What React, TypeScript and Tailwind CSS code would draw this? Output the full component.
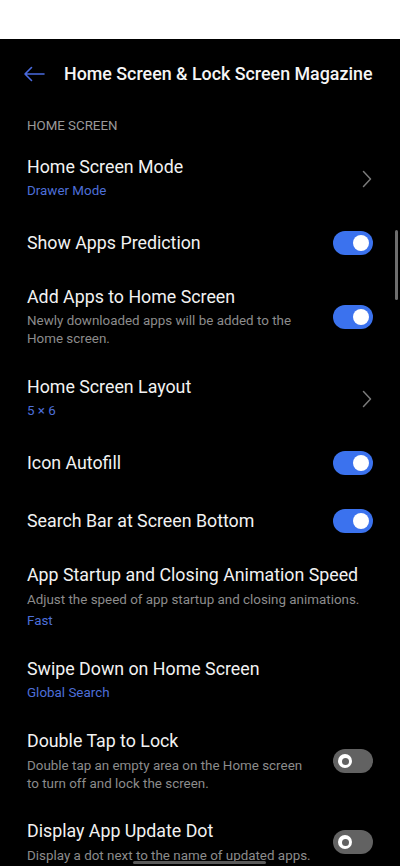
import React from "react";

type RowProps = {
  mt: string;
  title: string;
  desc?: string[];
  descMt?: string;
  value?: string;
  right?: "chevron" | "on" | "off";
};

function Toggle({ on }: { on: boolean }) {
  if (on) {
    return (
      <div className="flex h-[24px] w-[40px] items-center justify-end rounded-full bg-[#3b72ee] pr-[4px]">
        <div className="h-[16px] w-[16px] rounded-full bg-white" />
      </div>
    );
  }
  return (
    <div className="flex h-[24px] w-[40px] items-center justify-start rounded-full bg-[#626262] pl-[5px]">
      <div className="flex h-[14px] w-[14px] items-center justify-center rounded-full bg-white">
        <div className="h-[7px] w-[7px] rounded-full bg-[#626262]" />
      </div>
    </div>
  );
}

function Chevron() {
  return (
    <svg width="10" height="18" viewBox="0 0 10 18" fill="none">
      <path d="M1.5 1.5 L8.5 9 L1.5 16.5" stroke="#7a7a7a" strokeWidth="1.5" strokeLinecap="round" strokeLinejoin="round" />
    </svg>
  );
}

function Row({ mt, title, desc, descMt, value, right }: RowProps) {
  return (
    <div className={`flex items-center pl-[27px] pr-[27px] ${mt}`}>
      <div className="flex min-w-0 flex-1 flex-col">
        <div className="whitespace-nowrap text-[17.8px] leading-[24px] text-[#f2f2f2]">{title}</div>
        {desc && (
          <div className={`${descMt ?? "mt-[3px]"} whitespace-nowrap text-[13.4px] leading-[18px] text-[#8c8c8c]`}>
            {desc.map((d, i) => (
              <div key={i}>{d}</div>
            ))}
          </div>
        )}
        {value && <div className="text-[13.4px] leading-[24px] text-[#4d6fd9]">{value}</div>}
      </div>
      {right === "chevron" && (
        <div className="ml-3 flex w-[40px] justify-end pr-[1px]">
          <Chevron />
        </div>
      )}
      {right === "on" && (
        <div className="ml-3">
          <Toggle on />
        </div>
      )}
      {right === "off" && (
        <div className="ml-3">
          <Toggle on={false} />
        </div>
      )}
    </div>
  );
}

export default function App() {
  return (
    <div
      className="relative h-[866px] w-[400px] overflow-hidden bg-black"
      style={{ fontFamily: "Roboto, 'Noto Sans', sans-serif" }}
    >
      <div className="h-[39px] w-full bg-white" />
      <div className="flex h-[70px] items-center">
        <div className="flex w-[64px] justify-start pl-[23px]">
          <svg width="22" height="16" viewBox="0 0 22 16" fill="none">
            <path d="M21 8 H2 M8.5 1.5 L2 8 L8.5 14.5" stroke="#4a6be0" strokeWidth="1.6" strokeLinecap="round" strokeLinejoin="round" />
          </svg>
        </div>
        <div className="whitespace-nowrap text-[17.85px] font-medium text-[#f5f5f5]">Home Screen &amp; Lock Screen Magazine</div>
      </div>
      <div className="pl-[27px] pt-[7px] text-[13.3px] leading-[20px] text-[#9a9a9a]">HOME SCREEN</div>

      <Row mt="mt-[19px]" title="Home Screen Mode" value="Drawer Mode" right="chevron" />
      <Row mt="mt-[28px]" title="Show Apps Prediction" right="on" />
      <Row
        mt="mt-[30px]"
        title="Add Apps to Home Screen"
        desc={["Newly downloaded apps will be added to the", "Home screen."]}
        right="on"
      />
      <Row mt="mt-[27px]" title="Home Screen Layout" value="5 × 6" right="chevron" />
      <Row mt="mt-[28px]" title="Icon Autofill" right="on" />
      <Row mt="mt-[34px]" title="Search Bar at Screen Bottom" right="on" />
      <Row
        mt="mt-[30px]"
        title="App Startup and Closing Animation Speed"
        desc={["Adjust the speed of app startup and closing animations."]}
        descMt="mt-[4px]"
        value="Fast"
      />
      <Row mt="mt-[24px]" title="Swipe Down on Home Screen" value="Global Search" />
      <Row
        mt="mt-[24px]"
        title="Double Tap to Lock"
        desc={["Double tap an empty area on the Home screen", "to turn off and lock the screen."]}
        descMt="mt-[4px]"
        right="off"
      />
      <Row
        mt="mt-[26px]"
        title="Display App Update Dot"
        desc={["Display a dot next to the name of updated apps."]}
        descMt="mt-[4px]"
        right="off"
      />

      <div className="absolute right-[2px] top-[230px] h-[70px] w-[3px] rounded-full bg-[#6e6e6e]" />
      <div className="absolute left-[133px] top-[861px] h-[3px] w-[133px] rounded-full bg-[#5a5a5a]" />
    </div>
  );
}
